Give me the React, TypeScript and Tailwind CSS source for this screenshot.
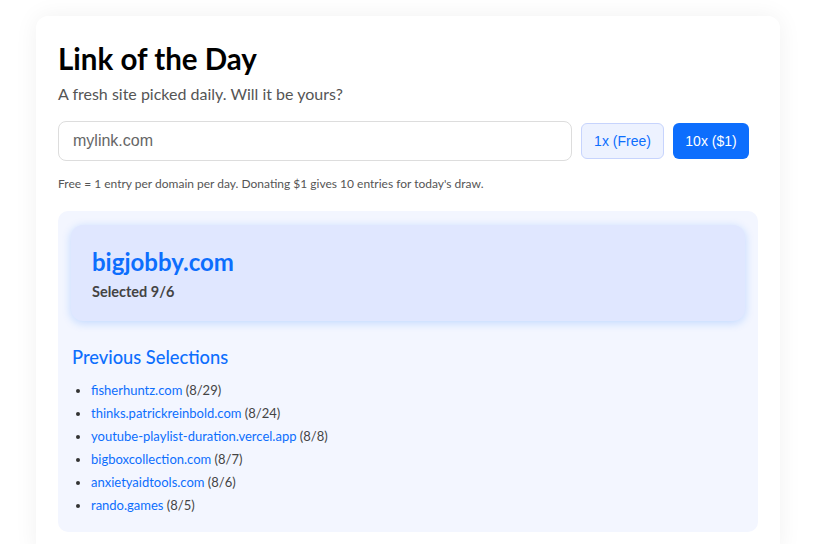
import React from 'react';

const PREVIOUS = [
  { domain: 'fisherhuntz.com', date: '8/29' },
  { domain: 'thinks.patrickreinbold.com', date: '8/24' },
  { domain: 'youtube-playlist-duration.vercel.app', date: '8/8' },
  { domain: 'bigboxcollection.com', date: '8/7' },
  { domain: 'anxietyaidtools.com', date: '8/6' },
  { domain: 'rando.games', date: '8/5' },
];

const App: React.FC = () => {
  return (
    <div className="min-h-screen bg-white pt-4 font-['Lato',sans-serif]">
      <div className="ml-[36px] w-[744px] rounded-xl bg-white px-[22px] pt-[26px] pb-6 shadow-[0_0_24px_rgba(0,0,0,0.06)]">
        {/* Header */}
        <h1 className="text-[29.5px] font-bold leading-[34px] text-black">Link of the Day</h1>
        <p className="mt-[6px] text-base leading-6 text-[#555]">A fresh site picked daily. Will it be yours?</p>

        {/* Entry form */}
        <div className="mt-[15px] flex items-center">
          <input
            type="text"
            placeholder="mylink.com"
            className="h-10 w-[514px] rounded-lg border border-[#ddd] px-[14px] font-['Liberation_Sans',sans-serif] text-base text-[#333] placeholder:text-[#666] outline-none"
          />
          <button className="ml-[9px] h-[36px] w-[83px] rounded-md border border-[#c7d4fd] bg-[#edf2ff] font-['Liberation_Sans',sans-serif] text-sm text-[#0d6efd]">
            1x (Free)
          </button>
          <button className="ml-[9px] h-[36px] w-[76px] rounded-md bg-[#0d6efd] font-['Liberation_Sans',sans-serif] text-sm text-white">
            10x ($1)
          </button>
        </div>
        <p className="mt-[14px] text-xs leading-[18px] text-[#555]">
          Free = 1 entry per domain per day. Donating $1 gives 10 entries for today's draw.
        </p>

        {/* Winner & history */}
        <div className="mt-[18px] rounded-[10px] bg-[#f3f6ff] px-[13px] pt-[14px] pb-[15px]">
          <div className="rounded-xl bg-[#e0e7ff] px-[21px] pt-[23px] pb-[19px] shadow-[0_2px_10px_rgba(13,110,253,0.22)]">
            <a href="#" className="block text-[24px] font-bold leading-[28px] text-[#0d6efd]">bigjobby.com</a>
            <p className="mt-[6px] text-[14.5px] font-bold leading-5 text-[#444]">Selected 9/6</p>
          </div>

          <h2 className="mt-[24px] pl-px text-[18.3px] leading-6 font-medium text-[#0d6efd]">Previous Selections</h2>
          <ul className="mt-[10px] list-disc pl-[20px] text-[13px] leading-[23px] text-[#444] marker:text-[#333]">
            {PREVIOUS.map(item => (
              <li key={item.domain}>
                <a href="#" className="text-[#0d6efd]">{item.domain}</a> ({item.date})
              </li>
            ))}
          </ul>
        </div>
      </div>
    </div>
  );
};

export default App;
